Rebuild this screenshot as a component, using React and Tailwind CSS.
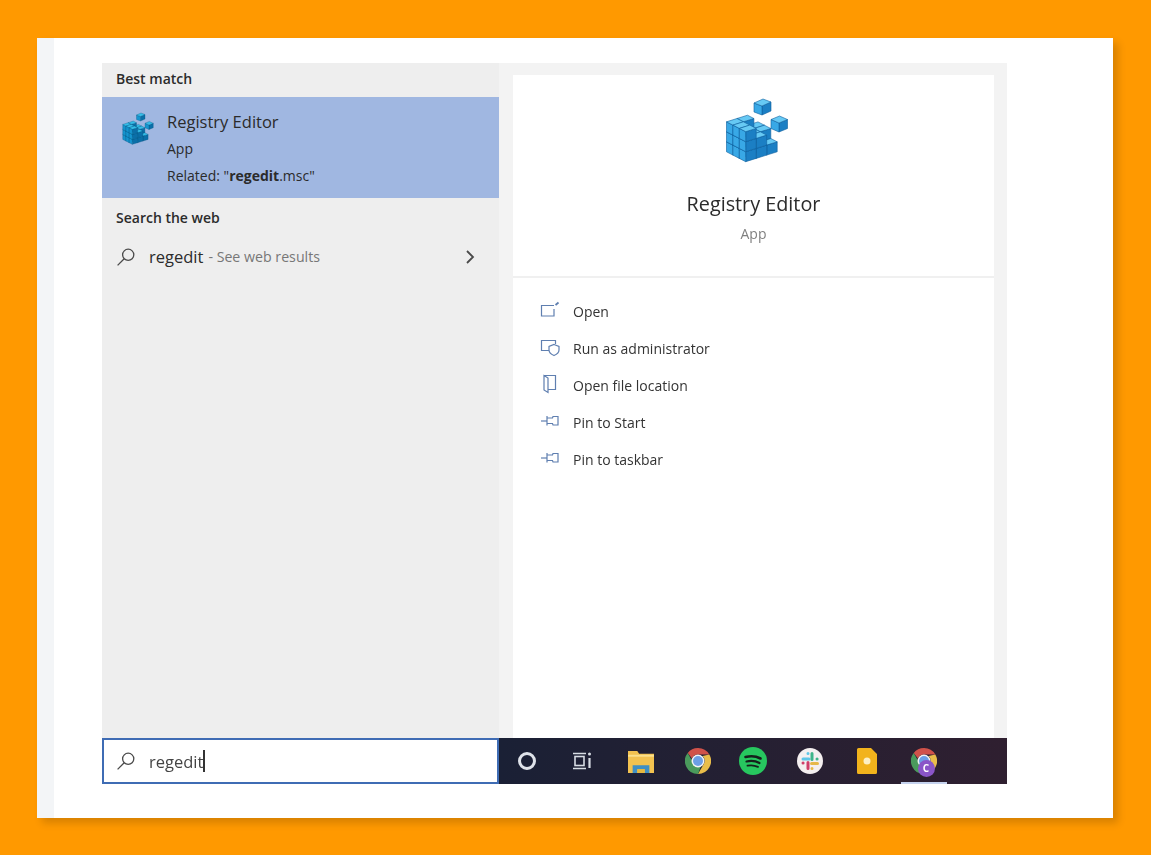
import React from "react";

const FONT = "font-['Open_Sans','Noto_Sans',sans-serif]";

// cube stack heights, a goes to the right, b goes to the left
const HEIGHTS = [
  [3, 3, 3],
  [2, 2, 3],
  [1, 2, 2],
];

const LIGHT = { line: "#0f5f9e", right: "#1b7fc4", left: "#38a8e6", top: "#66c9f4" };
const DEEP = { line: "#07507f", right: "#0b6fa8", left: "#1595cf", top: "#35bde8" };

const Cube = ({ x, y, colors, ax = 10.5, ay = -3.3, bx = -6.4, by = -3.3, h = 10 }) => {
  const pts = (list) => list.map((p) => p.join(",")).join(" ");
  const a = [x + ax, y + ay];
  const b = [x + bx, y + by];
  const ab = [x + ax + bx, y + ay + by];
  const up = (p) => [p[0], p[1] - h];
  const o = [x, y];
  return (
    <g stroke={colors.line} strokeWidth="0.6" strokeLinejoin="round">
      <polygon points={pts([o, a, up(a), up(o)])} fill={colors.right} />
      <polygon points={pts([o, b, up(b), up(o)])} fill={colors.left} />
      <polygon points={pts([up(o), up(a), up(ab), up(b)])} fill={colors.top} />
    </g>
  );
};

const RegistryIcon = ({ className, colors = LIGHT }) => {
  const cubes = [];
  for (let a = 2; a >= 0; a--) {
    for (let b = 2; b >= 0; b--) {
      for (let k = 0; k < HEIGHTS[a][b]; k++) {
        cubes.push(
          <Cube
            key={`${a}-${b}-${k}`}
            colors={colors}
            x={26.7 + a * 10.5 - b * 6.4}
            y={66.7 - (a + b) * 3.3 - k * 10}
          />
        );
      }
    }
  }
  return (
    <svg viewBox="0 0 70 70" className={className}>
      {cubes}
      <Cube colors={colors} x={43} y={20} ax={9} ay={-4} bx={-8} by={-3} h={9} />
      <Cube colors={colors} x={60} y={37} ax={8.5} ay={-3.5} bx={-8} by={-3.5} h={9} />
    </svg>
  );
};

const SearchIcon = ({ className }) => (
  <svg viewBox="0 0 20 20" fill="none" stroke="#4a4a4a" strokeWidth="1.3" className={className}>
    <circle cx="12.2" cy="7.8" r="5.6" />
    <path d="M8.2 11.8L1.6 18.4" />
  </svg>
);

const OpenIcon = () => (
  <svg viewBox="0 0 20 20" fill="none" stroke="#5f7fb0" strokeWidth="1.2" className="w-5 h-5 -mt-1">
    <path d="M14 5.500H1.500v10.500h12.500V9" />
    <path d="M15.500 5l3-2.500" strokeWidth="1.800" />
  </svg>
);

const AdminIcon = () => (
  <svg viewBox="0 0 20 20" fill="none" stroke="#5f7fb0" strokeWidth="1.2" className="w-5 h-5 -mt-1">
    <path d="M9 13.500H1.500V3.500h14v3.500" />
    <path d="M14 7.500l5 2v3.500c0 2.500-2.500 4.500-5 5.500-2.500-1-5-3-5-5.500V9.500z" />
  </svg>
);

const FolderIcon = () => (
  <svg viewBox="0 0 20 20" fill="none" stroke="#5f7fb0" strokeWidth="1.2" className="w-5 h-5 -mt-1">
    <path d="M4 1.500h11.500v14H8" />
    <path d="M4 1.500l4 2.500v14.500l-4-2.500z" />
  </svg>
);

const PinIcon = () => (
  <svg viewBox="0 0 20 20" fill="none" stroke="#5f7fb0" strokeWidth="1.2" className="w-5 h-5 -mt-1">
    <path d="M1 10h6" />
    <path d="M7 5v9.500" />
    <path d="M7 7h5.500l0.500-1.500h5v8.500h-5l-0.500-1.500H7" />
  </svg>
);

const TaskViewIcon = () => (
  <svg viewBox="0 0 22 20" fill="none" stroke="#d8dde4" strokeWidth="1.6" className="w-[22px] h-5 -ml-[1px]">
    <path d="M1 2.500h13M1 17.500h13" />
    <rect x="3" y="5.500" width="9" height="9" />
    <circle cx="17.500" cy="3" r="1.500" fill="#d8dde4" stroke="none" />
    <path d="M17.500 7v10" strokeWidth="2.200" />
  </svg>
);

const ExplorerIcon = () => (
  <svg viewBox="0 0 28 24" preserveAspectRatio="none" className="w-[26px] h-[23px] ml-[2px]">
    <path d="M0 1h10l2 3h16v20H0z" fill="#f2c250" />
    <rect x="0" y="5" width="28" height="2" fill="#fbe08c" />
    <path d="M5 24v-8h18v8h-5v-4h-8v4z" fill="#3f8fc4" />
    <rect x="10" y="20" width="8" height="4" fill="#e8b93f" />
  </svg>
);

const ChromeIcon = ({ className }) => (
  <svg viewBox="0 0 26 26" className={className}>
    <path d="M13 0a13 13 0 0 1 11.300 6.500H13a6.500 6.500 0 0 0-6 4L2.700 5A13 13 0 0 1 13 0z" fill="#d0524a" />
    <path d="M24.300 6.500A13 13 0 0 1 13 26l5.600-9.700A6.500 6.500 0 0 0 17.500 8z" fill="#e9bd4a" />
    <path d="M13 26A13 13 0 0 1 2.700 5l5.600 9.900a6.500 6.500 0 0 0 7.700 3z" fill="#4a9a5c" />
    <circle cx="13" cy="13" r="6.500" fill="#f4f4f4" />
    <circle cx="13" cy="13" r="5" fill="#6c9fe6" />
  </svg>
);

const SpotifyIcon = () => (
  <svg viewBox="0 0 28 28" fill="none" stroke="#15201c" strokeLinecap="round" className="w-7 h-7">
    <circle cx="14" cy="14" r="14" fill="#27c75f" stroke="none" />
    <path d="M6.500 10c5-1.300 10.500-1 15 1.500" strokeWidth="2.600" />
    <path d="M7.500 14.500c4.500-1.100 9-.7 13 1.500" strokeWidth="2.200" />
    <path d="M8.500 18.700c3.500-.8 7-.5 10.500 1.200" strokeWidth="1.800" />
  </svg>
);

const SlackIcon = () => (
  <svg viewBox="0 0 26 26" fill="none" strokeLinecap="round" strokeWidth="3" className="w-[26px] h-[26px]">
    <circle cx="13" cy="13" r="13" fill="#f4eff0" />
    <path d="M6 11h6M11 5.500v.1" stroke="#5fc6e8" />
    <path d="M15 5.500v6M20 11h.1" stroke="#3fb58a" />
    <path d="M14.500 15.500h6M15 20.500v.1" stroke="#e6b84a" />
    <path d="M11 14.500v6M6 15h.1" stroke="#cf3f6a" />
  </svg>
);

const KeepIcon = () => (
  <svg viewBox="0 0 20 26" className="w-5 h-[26px] ml-[2px]">
    <path d="M1.500 0H14l6 6v18.500a1.500 1.500 0 0 1-1.500 1.500h-17A1.500 1.500 0 0 1 0 24.500V1.500A1.500 1.500 0 0 1 1.500 0z" fill="#f2b31c" />
    <circle cx="10" cy="13" r="3.500" fill="#fdf0c4" />
  </svg>
);

const TASK_ICONS = [
  <div className="w-[18px] h-[18px] rounded-full border-[3px] border-[#dfe3ea]" />,
  <TaskViewIcon />,
  <ExplorerIcon />,
  <ChromeIcon className="w-[26px] h-[26px] ml-[2px]" />,
  <SpotifyIcon />,
  <SlackIcon />,
  <KeepIcon />,
];

const ACTIONS = [
  { label: "Open", icon: <OpenIcon /> },
  { label: "Run as administrator", icon: <AdminIcon /> },
  { label: "Open file location", icon: <FolderIcon /> },
  { label: "Pin to Start", icon: <PinIcon /> },
  { label: "Pin to taskbar", icon: <PinIcon /> },
];

const App = () => {
  return (
    <div className={`${FONT} h-[855px] bg-[#ff9900] pt-[38px] pl-[37px] overflow-hidden`}>
      <div className="w-[1076px] h-[780px] bg-white flex shadow-[5px_5px_8px_rgba(0,0,0,0.16)]">
        <div className="w-[17px] bg-[#f3f5f7]" />
        <div className="pl-[48px] pt-[25px]">
          <div className="w-[905px] h-[721px] flex text-[#2b2b2b] blur-[0.4px]">
            {/* results list + search box */}
            <div className="w-[397px] flex flex-col">
              <div className="flex-1 bg-[#eeeeee]">
                <div className="h-[34px] pl-[14px] pb-[3px] flex items-center text-[14px] font-semibold">Best match</div>
                <div className="h-[101px] bg-[#a0b7e1] pl-4 flex items-center gap-[13px]">
                  <RegistryIcon colors={DEEP} className="w-[35px] h-[35px] -mt-[38px] ml-[1px]" />
                  <div className="flex flex-col pt-[2px]">
                    <span className="text-[16.500px] leading-[24px]">Registry Editor</span>
                    <span className="text-[14px] leading-[30px]">App</span>
                    <span className="text-[14px] leading-[24px]">
                      Related: "<b className="font-bold">regedit</b>.msc"
                    </span>
                  </div>
                </div>
                <div className="h-[38px] pl-[14px] flex items-center text-[14px] font-semibold">Search the web</div>
                <div className="h-[42px] pl-[14px] pr-[24px] flex items-center">
                  <SearchIcon className="w-5 h-5" />
                  <span className="ml-[13px] text-[16.500px]">regedit</span>
                  <span className="ml-[5px] text-[14.200px] text-[#777777]">- See web results</span>
                  <svg viewBox="0 0 10 16" fill="none" stroke="#4a4a4a" strokeWidth="1.800" className="w-[10px] h-4 ml-auto">
                    <path d="M2 2l6 6-6 6" />
                  </svg>
                </div>
              </div>
              <div className="h-[46px] bg-white border-2 border-[#3f6cb4] pl-[12px] flex items-center">
                <SearchIcon className="w-5 h-5" />
                <span className="ml-[13px] pt-[2px] text-[16.500px] text-[#444444]">regedit</span>
                <div className="w-[2px] h-[22px] bg-[#333333]" />
              </div>
            </div>
            {/* preview pane + taskbar */}
            <div className="flex-1 flex flex-col">
              <div className="flex-1 bg-[#f3f3f3] pt-3 pl-[14px] pr-[13px]">
                <div className="h-full bg-white flex flex-col">
                  <div className="h-[203px] flex flex-col items-center border-b-2 border-[#f0f0f0]">
                    <RegistryIcon className="w-[70px] h-[70px] mt-[20px] ml-[1px]" />
                    <span className="mt-[25px] text-[19.800px] leading-[28px]">Registry Editor</span>
                    <span className="mt-[2px] text-[14px] leading-[28px] text-[#808080]">App</span>
                  </div>
                  <div className="pt-[15px] pl-[27px] flex flex-col">
                    {ACTIONS.map((action) => (
                      <div key={action.label} className="h-[37px] flex items-center gap-[13px] text-[14px] text-[#333333]">
                        {action.icon}
                        <span>{action.label}</span>
                      </div>
                    ))}
                  </div>
                </div>
              </div>
              <div className="h-[46px] bg-gradient-to-r from-[#1a2035] to-[#2f1f30] flex">
                {TASK_ICONS.map((icon, i) => (
                  <div key={i} className="w-[56.500px] flex items-center justify-center">
                    {icon}
                  </div>
                ))}
                <div className="relative w-[56.500px] flex items-center justify-center">
                  <ChromeIcon className="w-[26px] h-[26px] ml-[2px]" />
                  <div className="absolute left-[23px] top-[22px] w-[17px] h-[17px] rounded-full bg-[#8a55c8] text-white text-[10px] font-bold leading-[17px] text-center">
                    C
                  </div>
                  <div className="absolute left-[6px] bottom-0 w-[46px] h-[2px] bg-[#c5d2ee]" />
                </div>
              </div>
            </div>
          </div>
        </div>
      </div>
    </div>
  );
};

export default App;
